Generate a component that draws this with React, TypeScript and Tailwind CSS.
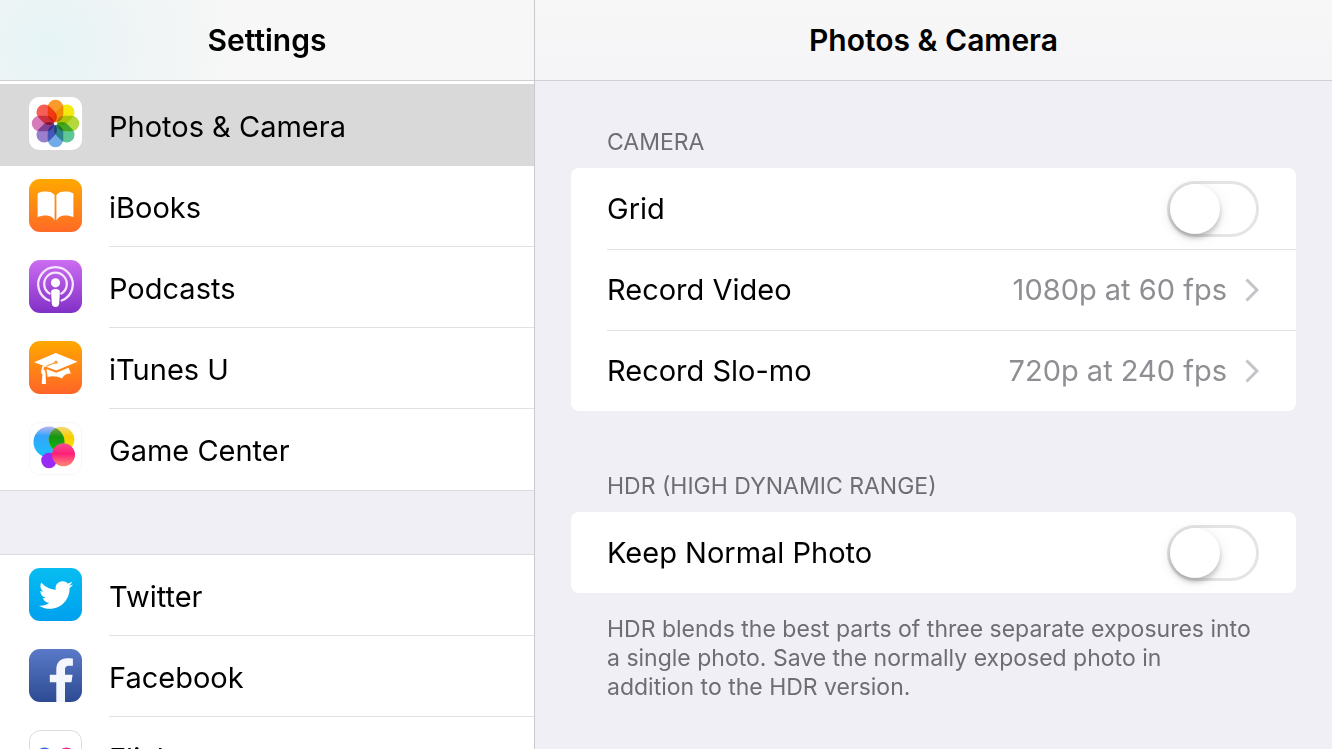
import { useState, type ReactNode } from 'react';
import { FaTwitter } from 'react-icons/fa';

function PhotosIcon() {
  const petals = ['#f99b2c', '#f5ea10', '#b4d83e', '#5fc795', '#72abe8', '#9a80cc', '#d67cba', '#f65f55'];
  return (
    <svg viewBox="0 0 53 53" className="size-full" aria-hidden="true">
      <rect width="53" height="53" rx="10" fill="#fff" />
      <g className="isolate">
        {petals.map((color, i) => (
          <rect
            key={color}
            x="18.700"
            y="2.800"
            width="15.600"
            height="22.500"
            rx="7.800"
            fill={color}
            transform={`rotate(${i * 45} 26.500 26.500)`}
            className="mix-blend-multiply"
          />
        ))}
      </g>
      <circle cx="26.500" cy="26.500" r="1.600" fill="#fff" />
    </svg>
  );
}

function IBooksIcon() {
  return (
    <svg viewBox="0 0 53 53" className="size-full" aria-hidden="true">
      <defs>
        <linearGradient id="ibooks" x1="0" y1="0" x2="0" y2="1">
          <stop offset="0" stopColor="#ffa800" />
          <stop offset="1" stopColor="#ff6a26" />
        </linearGradient>
      </defs>
      <rect width="53" height="53" rx="11" fill="url(#ibooks)" />
      <path
        d="M25.600 16C23.500 12.800 19 12.100 15 12.500c-3.300.3-6 1.300-6.400 2.300v23.400c3-1.500 6.500-2 9.600-1.600 3.300.4 6 2.200 7.400 4.800zM27.400 16C29.500 12.800 34 12.100 38 12.500c3.300.3 6 1.300 6.400 2.300v23.400c-3-1.500-6.500-2-9.600-1.600-3.300.4-6 2.200-7.400 4.800z"
        fill="#fff"
      />
    </svg>
  );
}

function PodcastsIcon() {
  return (
    <svg viewBox="0 0 53 53" className="size-full" aria-hidden="true">
      <defs>
        <linearGradient id="podcasts" x1="0" y1="0" x2="0" y2="1">
          <stop offset="0" stopColor="#cc6df2" />
          <stop offset="1" stopColor="#8130c6" />
        </linearGradient>
      </defs>
      <rect width="53" height="53" rx="11" fill="url(#podcasts)" />
      <g fill="none" stroke="#f6e6fd" strokeWidth="2.300" strokeLinecap="round">
        <path d="M20.300 40.500A17.300 17.300 0 1 1 32.700 40.500" />
        <path d="M20.600 33.600A11.300 11.300 0 1 1 32.400 33.600" />
      </g>
      <circle cx="26.500" cy="22.800" r="4.600" fill="#fff" />
      <path
        d="M22.100 32c0-2.200 1.800-3 4.400-3s4.400.8 4.400 3l-.7 11.200c-.2 2.600-1.500 3.800-3.700 3.800s-3.500-1.200-3.700-3.800z"
        fill="#fff"
      />
    </svg>
  );
}

function ITunesUIcon() {
  return (
    <svg viewBox="0 0 53 53" className="size-full" aria-hidden="true">
      <defs>
        <linearGradient id="itunesu" x1="0" y1="0" x2="0" y2="1">
          <stop offset="0" stopColor="#ffa800" />
          <stop offset="1" stopColor="#ff6427" />
        </linearGradient>
      </defs>
      <rect width="53" height="53" rx="11" fill="url(#itunesu)" />
      <path d="M26.700 12L48.500 20.800 27.300 29.600 5 21.200z" fill="#fff" />
      <path d="M17.500 28l9.800 3.800 12.200-5 2.400 5.800c-3.600-.2-6.500 1-9 4.900-4-2.300-9.500-2.600-14.400-1.600z" fill="#fff" />
      <path d="M26.500 21.300l-11 3.600c-1.400.5-1.900 1.500-1.900 3v3" fill="none" stroke="#fff" strokeWidth="2" />
      <path d="M27 21.400l-10 3.900" stroke="#f8a23a" strokeWidth="1.200" />
      <circle cx="27" cy="21.200" r="1.700" fill="#f8a23a" />
      <circle cx="14.300" cy="31" r="2.200" fill="#fff" />
      <path d="M13.400 32h3.200l.4 11h-4.200z" fill="#fff" />
    </svg>
  );
}

function GameCenterIcon() {
  return (
    <svg viewBox="0 0 53 53" className="size-full" aria-hidden="true">
      <defs>
        <linearGradient id="gcBlue" x1="0" y1="0" x2="0" y2="1">
          <stop offset="0" stopColor="#b9b4f0" />
          <stop offset=".3" stopColor="#34a5fb" />
          <stop offset="1" stopColor="#17c1fb" />
        </linearGradient>
        <linearGradient id="gcYellow" x1="0" y1="0" x2="0" y2="1">
          <stop offset="0" stopColor="#f6d97a" />
          <stop offset=".4" stopColor="#f7cf00" />
          <stop offset="1" stopColor="#fbe400" />
        </linearGradient>
        <linearGradient id="gcGreen" x1="0" y1="0" x2="0" y2="1">
          <stop offset="0" stopColor="#7f9f55" />
          <stop offset=".4" stopColor="#14960f" />
          <stop offset="1" stopColor="#18b81a" />
        </linearGradient>
        <linearGradient id="gcPink" x1="0" y1="0" x2="0" y2="1">
          <stop offset="0" stopColor="#f84e90" />
          <stop offset=".45" stopColor="#fc1f78" />
          <stop offset="1" stopColor="#ff8b75" />
        </linearGradient>
        <clipPath id="gcClip">
          <circle cx="20" cy="20" r="15.500" />
        </clipPath>
      </defs>
      <rect x=".5" y=".5" width="52" height="52" rx="10" fill="#fff" stroke="#f7f7f7" />
      <circle cx="20" cy="20" r="15.500" fill="url(#gcBlue)" />
      <circle cx="32.500" cy="17.500" r="12.800" fill="url(#gcYellow)" />
      <circle cx="32.500" cy="17.500" r="12.800" fill="url(#gcGreen)" clipPath="url(#gcClip)" />
      <circle cx="20" cy="38.500" r="7.800" fill="#9a2bf5" />
      <circle cx="34.500" cy="32.800" r="11.500" fill="url(#gcPink)" />
    </svg>
  );
}

function TwitterIcon() {
  return (
    <span className="flex size-full items-center justify-center rounded-[11px] bg-linear-to-b from-[#08bdf1] to-[#00a0ee]">
      <FaTwitter className="size-[34px] text-white" />
    </span>
  );
}

function FacebookIcon() {
  return (
    <span className="block size-full overflow-hidden rounded-[11px] bg-linear-to-b from-[#5a7ac8] to-[#2d4b93]">
      <svg viewBox="0 0 53 53" className="size-full" aria-hidden="true">
        <path
          d="M27.300 53V33.200h-6.500v-7.500h6.500v-4.900c0-7.600 4.200-11.600 11-11.600 2.200 0 4.200.1 5.600.4v7.200h-3.700c-3.300 0-4.200 1.600-4.200 4.100v4.800h7.600l-1.100 7.500H36V53z"
          fill="#f3f6fc"
        />
      </svg>
    </span>
  );
}

function FlickrIcon() {
  return (
    <svg viewBox="0 0 53 53" className="size-full" aria-hidden="true">
      <rect x=".5" y=".5" width="52" height="52" rx="11" fill="#fff" stroke="#dcdce0" />
      <circle cx="15.500" cy="26.500" r="9" fill="#3f62d3" />
      <circle cx="37.500" cy="26.500" r="9" fill="#ee2a8b" />
    </svg>
  );
}

function AppRow({ icon, label, selected = false, last = false }: {
  icon: ReactNode;
  label: string;
  selected?: boolean;
  last?: boolean;
}) {
  return (
    <li>
      <a
        href="#"
        aria-current={selected ? 'page' : undefined}
        className={`flex gap-[27px] pl-[29px] ${selected ? 'h-[82px] bg-[#d9d9d9]' : 'h-[81px] bg-white'}`}
      >
        <span className="mt-[13px] size-[53px] shrink-0">{icon}</span>
        <span
          className={`flex flex-1 items-center border-b pt-1 ${selected || last ? 'border-transparent' : 'border-[#e1e1e4]'}`}
        >
          {label}
        </span>
      </a>
    </li>
  );
}

function SwitchRow({ id, label }: { id: string; label: string }) {
  const [on, setOn] = useState(false);
  return (
    <div className="flex h-[81px] items-center justify-between pr-[37px]">
      <label htmlFor={id}>{label}</label>
      <input
        id={id}
        type="checkbox"
        role="switch"
        checked={on}
        onChange={(e) => setOn(e.target.checked)}
        className="flex h-14 w-[92px] cursor-pointer appearance-none items-center rounded-full border-[3px] border-[#e4e4e4] bg-white before:size-[50px] before:rounded-full before:bg-white before:shadow-[0_4px_5px_rgba(0,0,0,0.2),0_3px_14px_rgba(0,0,0,0.1)] checked:justify-end checked:border-[#4cd964] checked:bg-[#4cd964]"
      />
    </div>
  );
}

function LinkRow({ label, value }: { label: string; value: string }) {
  return (
    <button type="button" className="flex h-[81px] w-full items-center border-t border-[#e1e1e4] pr-[37px] text-left">
      <span className="flex-1">{label}</span>
      <span className="text-[#8e8e93]">{value}</span>
      <svg viewBox="0 0 14 24" className="ml-[18px] h-6 w-3.5" fill="none" stroke="#c3c3c8" strokeWidth="3" aria-hidden="true">
        <path d="M1.500 1.500L12 12 1.500 22.500" />
      </svg>
    </button>
  );
}

export default function App() {
  return (
    <div className="flex h-screen overflow-hidden bg-[#efeff5] font-[Inter,sans-serif] text-[29px] leading-9 text-black">
      <aside className="flex w-[535px] shrink-0 flex-col border-r border-[#c9c9ce]">
        <header className="flex h-[81px] shrink-0 items-center justify-center border-b border-[#d0d0d2] bg-[#f7f7f7] bg-[radial-gradient(circle_at_50px_45px,#e6f4f6_0px,#eef4f5_70px,#f7f7f7_190px)]">
          <h1 className="text-[30px] font-semibold">Settings</h1>
        </header>
        <nav aria-label="Settings" className="min-h-0 flex-1 overflow-hidden">
          <ul className="border-b border-[#dcdce0] bg-white pt-[3px]">
            <AppRow icon={<PhotosIcon />} label="Photos & Camera" selected />
            <AppRow icon={<IBooksIcon />} label="iBooks" />
            <AppRow icon={<PodcastsIcon />} label="Podcasts" />
            <AppRow icon={<ITunesUIcon />} label="iTunes U" />
            <AppRow icon={<GameCenterIcon />} label="Game Center" last />
          </ul>
          <ul className="mt-[63px] border-t border-[#dcdce0] bg-white">
            <AppRow icon={<TwitterIcon />} label="Twitter" />
            <AppRow icon={<FacebookIcon />} label="Facebook" />
            <AppRow icon={<FlickrIcon />} label="Flickr" />
          </ul>
        </nav>
      </aside>

      <main className="flex min-w-0 flex-1 flex-col">
        <header className="flex h-[81px] shrink-0 items-center justify-center border-b border-[#d0d0d4] bg-linear-to-b from-[#f7f7f7] to-[#f5f5f8]">
          <h2 className="text-[30px] font-semibold">Photos &amp; Camera</h2>
        </header>
        <div className="min-h-0 flex-1 overflow-hidden px-9">
          <section className="pt-[47px]">
            <h3 className="pl-9 text-[23px] leading-7 text-[#6d6d72]">CAMERA</h3>
            <div className="mt-3 rounded-lg bg-white pl-9">
              <SwitchRow id="grid" label="Grid" />
              <LinkRow label="Record Video" value="1080p at 60 fps" />
              <LinkRow label="Record Slo-mo" value="720p at 240 fps" />
            </div>
          </section>
          <section className="pt-[61px]">
            <h3 className="pl-9 text-[23px] leading-7 text-[#6d6d72]">HDR (HIGH DYNAMIC RANGE)</h3>
            <div className="mt-3 rounded-lg bg-white pl-9">
              <SwitchRow id="keep-normal" label="Keep Normal Photo" />
            </div>
            <p className="mt-[22px] pl-9 pr-[43px] text-[23px] leading-[29px] text-[#6d6d72]">
              HDR blends the best parts of three separate exposures into a single photo. Save the normally exposed photo in
              addition to the HDR version.
            </p>
          </section>
        </div>
      </main>
    </div>
  );
}
